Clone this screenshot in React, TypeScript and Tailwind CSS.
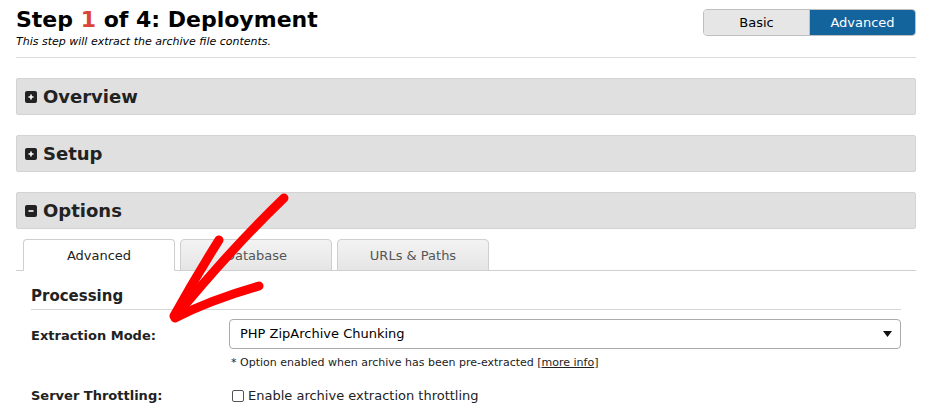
import { useState } from 'react';

const font = { fontFamily: '"DejaVu Sans", Verdana, sans-serif' };

function Bar({ title, open }: { title: string; open?: boolean }) {
  return (
    <div className="flex h-[37px] items-center gap-[6px] rounded-[2px] border border-[#d3d3d3] bg-[#e0e0e0] pl-[8px]">
      <span className="flex h-[12px] w-[12px] items-center justify-center rounded-[2px] bg-[#222]">
        <svg width="8" height="8" viewBox="0 0 8 8">
          <path d={open ? 'M1.5 4h5' : 'M1.5 4h5M4 1.5v5'} stroke="#fff" strokeWidth="1.6" />
        </svg>
      </span>
      <span className="text-[18px] font-bold text-[#222]">{title}</span>
    </div>
  );
}

export default function App() {
  const [mode, setMode] = useState('advanced');
  const [tab, setTab] = useState('Advanced');
  const tabs = ['Advanced', 'Database', 'URLs & Paths'];

  return (
    <div className="relative h-[416px] w-[933px] overflow-hidden bg-white" style={font}>
      <div className="px-[16px] pr-[17px]">
        {/* Header */}
        <div className="flex items-start justify-between border-b border-[#dcdcdc] pb-[8px] pt-[6px]">
          <div>
            <h1 className="text-[22px] font-bold leading-[28px] text-black">
              Step <span className="text-[#d9453b]">1</span> of 4: Deployment
            </h1>
            <div className="mt-[1px] text-[11px] italic leading-[14px] text-black">
              This step will extract the archive file contents.
            </div>
          </div>
          <div className="mt-[3px] flex h-[27px] overflow-hidden rounded-[4px] border border-[#bfbfbf] text-[13px]">
            <button
              onClick={() => setMode('basic')}
              className={`w-[105px] ${mode === 'basic' ? 'bg-[#13639c] text-white' : 'bg-[#e6e6e6] text-black'}`}
            >
              Basic
            </button>
            <button
              onClick={() => setMode('advanced')}
              className={`w-[106px] border-l border-[#bfbfbf] ${mode === 'advanced' ? 'bg-[#13639c] text-white' : 'bg-[#e6e6e6] text-black'}`}
            >
              Advanced
            </button>
          </div>
        </div>

        <div className="mt-[20px] flex flex-col gap-[20px]">
          <Bar title="Overview" />
          <Bar title="Setup" />
          <Bar title="Options" open />
        </div>

        {/* Tabs */}
        <div className="mt-[10px] flex gap-[5px] border-b border-[#cfcfcf] pl-[7px] pr-[5px]">
          {tabs.map((t) => (
            <button
              key={t}
              onClick={() => setTab(t)}
              className={`-mb-px h-[32px] w-[152px] rounded-t-[4px] border border-[#cfcfcf] pt-[2px] text-[13px] ${
                tab === t
                  ? 'border-b-white bg-white text-[#222]'
                  : 'bg-gradient-to-b from-[#f3f3f3] to-[#e5e5e5] text-[#555]'
              }`}
            >
              {t}
            </button>
          ))}
        </div>

        {/* Processing */}
        <div className="px-[15px]">
          <div className="mt-[16px] border-b border-[#d6d6d6] pb-[3px] text-[15px] font-bold leading-[19px] text-[#222]">
            Processing
          </div>
          <div className="mt-[9px] flex">
            <div className="w-[198px] pt-[7px] text-[13px] font-bold text-[#222]">Extraction Mode:</div>
            <div className="flex-1">
              <div className="flex h-[30px] items-center justify-between rounded-[4px] border border-[#aaa] pl-[10px] pr-[8px] text-[13px] text-black">
                <span>PHP ZipArchive Chunking</span>
                <svg width="9" height="6" viewBox="0 0 9 6">
                  <path d="M0 0h9L4.5 6z" fill="#111" />
                </svg>
              </div>
              <div className="mt-[7px] pl-[2px] text-[11px] leading-[14px] text-[#222]">
                * Option enabled when archive has been pre-extracted [<span className="underline">more info</span>]
              </div>
            </div>
          </div>
          <div className="mt-[16px] flex items-center">
            <div className="w-[198px] text-[13px] font-bold text-[#222]">Server Throttling:</div>
            <label className="flex items-center gap-[4px] pl-[3px] text-[13px] text-[#222]">
              <span className="h-[12px] w-[12px] rounded-[2px] border border-[#555] bg-white" />
              Enable archive extraction throttling
            </label>
          </div>
        </div>
      </div>

      {/* red annotation arrow */}
      <svg className="pointer-events-none absolute left-0 top-0" width="933" height="416">
        <g stroke="#ff0000" strokeWidth="9" strokeLinecap="round" fill="none">
          <path d="M284 198 Q230 250 175 317" />
          <path d="M219 240 Q195 278 174 316" />
          <path d="M259 286 Q210 300 175 318" />
        </g>
      </svg>
    </div>
  );
}
